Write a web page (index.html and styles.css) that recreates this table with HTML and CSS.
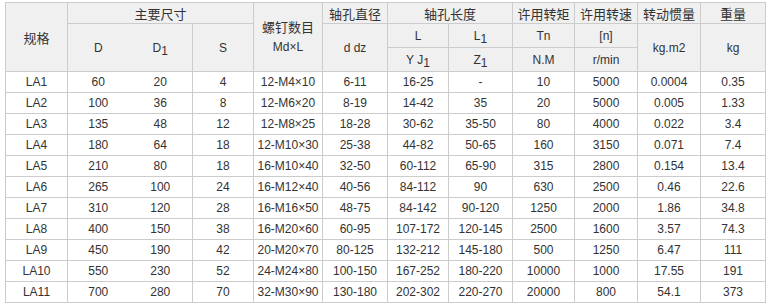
FILE: index.html
```html
<!DOCTYPE html>
<html>
<head>
<meta charset="utf-8">
<link rel="stylesheet" href="styles.css">
</head>
<body>
<div class="wrap">
<table class="spec">
<colgroup>
<col class="c62"><col class="c61"><col class="c64"><col class="c61"><col class="c69"><col class="c65"><col class="c61"><col class="c64"><col class="c62"><col class="c63"><col class="c63"><col class="c65">
</colgroup>
<thead>
<tr class="h1">
<th rowspan="3">规格</th>
<th colspan="3">主要尺寸</th>
<th rowspan="3" class="two">螺钉数目<br><span class="en">Md×L</span></th>
<th>轴孔直径</th>
<th colspan="2">轴孔长度</th>
<th>许用转矩</th>
<th>许用转速</th>
<th>转动惯量</th>
<th>重量</th>
</tr>
<tr class="h2">
<th rowspan="2" class="en nob">D</th>
<th rowspan="2" class="en">D<span class="sb">1</span></th>
<th rowspan="2" class="en">S</th>
<th rowspan="2" class="en">d dz</th>
<th class="en">L</th>
<th class="en">L<span class="sb">1</span></th>
<th class="en">Tn</th>
<th class="en">[n]</th>
<th rowspan="2" class="en">kg.m2</th>
<th rowspan="2" class="en">kg</th>
</tr>
<tr class="h3">
<th class="en">Y J<span class="sb">1</span></th>
<th class="en">Z<span class="sb">1</span></th>
<th class="en">N.M</th>
<th class="en">r/min</th>
</tr>
</thead>
<tbody>
<tr><td>LA1</td><td class="nob">60</td><td>20</td><td>4</td><td>12-M4×10</td><td>6-11</td><td>16-25</td><td>-</td><td>10</td><td>5000</td><td>0.0004</td><td>0.35</td></tr>
<tr><td>LA2</td><td class="nob">100</td><td>36</td><td>8</td><td>12-M6×20</td><td>8-19</td><td>14-42</td><td>35</td><td>20</td><td>5000</td><td>0.005</td><td>1.33</td></tr>
<tr><td>LA3</td><td class="nob">135</td><td>48</td><td>12</td><td>12-M8×25</td><td>18-28</td><td>30-62</td><td>35-50</td><td>80</td><td>4000</td><td>0.022</td><td>3.4</td></tr>
<tr><td>LA4</td><td class="nob">180</td><td>64</td><td>18</td><td>12-M10×30</td><td>25-38</td><td>44-82</td><td>50-65</td><td>160</td><td>3150</td><td>0.071</td><td>7.4</td></tr>
<tr><td>LA5</td><td class="nob">210</td><td>80</td><td>18</td><td>16-M10×40</td><td>32-50</td><td>60-112</td><td>65-90</td><td>315</td><td>2800</td><td>0.154</td><td>13.4</td></tr>
<tr><td>LA6</td><td class="nob">265</td><td>100</td><td>24</td><td>16-M12×40</td><td>40-56</td><td>84-112</td><td>90</td><td>630</td><td>2500</td><td>0.46</td><td>22.6</td></tr>
<tr><td>LA7</td><td class="nob">310</td><td>120</td><td>28</td><td>16-M16×50</td><td>48-75</td><td>84-142</td><td>90-120</td><td>1250</td><td>2000</td><td>1.86</td><td>34.8</td></tr>
<tr><td>LA8</td><td class="nob">400</td><td>150</td><td>38</td><td>16-M20×60</td><td>60-95</td><td>107-172</td><td>120-145</td><td>2500</td><td>1600</td><td>3.57</td><td>74.3</td></tr>
<tr><td>LA9</td><td class="nob">450</td><td>190</td><td>42</td><td>20-M20×70</td><td>80-125</td><td>132-212</td><td>145-180</td><td>500</td><td>1250</td><td>6.47</td><td>111</td></tr>
<tr><td>LA10</td><td class="nob">550</td><td>230</td><td>52</td><td>24-M24×80</td><td>100-150</td><td>167-252</td><td>180-220</td><td>10000</td><td>1000</td><td>17.55</td><td>191</td></tr>
<tr><td>LA11</td><td class="nob">700</td><td>280</td><td>70</td><td>32-M30×90</td><td>130-180</td><td>202-302</td><td>220-270</td><td>20000</td><td>800</td><td>54.1</td><td>373</td></tr>
</tbody>
</table>
</div>
</body>
</html>
```
FILE: styles.css
```css
html, body {
  margin: 0;
  padding: 0;
  background: #ffffff;
}
.wrap {
  padding: 2px 0 0 5px;
}
.spec {
  border-collapse: collapse;
  table-layout: fixed;
  width: 761px;
  font-family: "Liberation Sans", Arial, "Noto Sans CJK SC", sans-serif;
  font-size: 12px;
  color: #333333;
}
.c62 { width: 62px; }
.c61 { width: 61px; }
.c64 { width: 64px; }
.c69 { width: 69px; }
.c65 { width: 65px; }
.c63 { width: 63px; }
.spec th, .spec td {
  border: 1px solid #cccccc;
  text-align: center;
  padding: 0;
  font-weight: normal;
}
.spec th {
  background: #f0f0f0;
  font-size: 13px;
  font-family: "Noto Sans CJK SC", "Liberation Sans", sans-serif;
}
.spec th.en, .spec .en {
  font-family: "Liberation Sans", Arial, sans-serif;
  font-size: 12px;
}
.h1 { height: 21px; }
.h2 { height: 24px; }
.h3 { height: 24px; }
.spec tbody tr { height: 21px; }
.spec .nob { border-right-style: hidden; }
.sb {
  position: relative;
  top: 3px;
}
.two { line-height: 19px; }
```
